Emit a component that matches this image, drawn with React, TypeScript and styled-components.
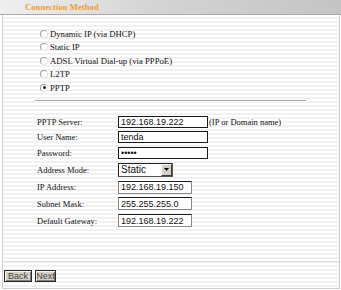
import React from 'react';
import styled, { createGlobalStyle } from 'styled-components';

const GlobalStyle = createGlobalStyle`
  html, body {
    margin: 0;
    padding: 0;
    background: #fff;
  }
  body {
    font-family: "Liberation Serif", "Times New Roman", serif;
  }
`;

const Page = styled.div`
  width: 341px;
  height: 290px;
  display: flex;
  flex-direction: column;
  overflow: hidden;
`;

const Header = styled.div`
  flex: none;
  height: 14px;
  display: flex;
  align-items: center;
  padding-left: 25px;
  background: linear-gradient(to right, #efefef, #d4d4d4 45%, #c4c4c4);
  border-bottom: 1px solid #a9a9a9;
`;

const Title = styled.h1`
  margin: 0;
  font-size: 8.5px;
  font-weight: bold;
  color: #f59a2c;
  letter-spacing: 0.1px;
`;

const Panel = styled.div`
  flex: 1;
  margin: 0 1px 1px 2px;
  border: 1px solid #cfcfcf;
  border-top: none;
  background: repeating-linear-gradient(to bottom, #fff 0 2px, #f1f1f1 2px 4px);
  display: flex;
  flex-direction: column;
`;

const RadioList = styled.div`
  padding: 12px 0 0 37px;
  display: flex;
  flex-direction: column;
`;

const RadioRow = styled.label`
  height: 13.5px;
  display: flex;
  align-items: center;
  gap: 2px;
  font-size: 8.7px;
  color: #111;
`;

const RadioDot = styled.span<{ checked?: boolean }>`
  box-sizing: border-box;
  width: 8px;
  height: 8px;
  border-radius: 50%;
  border: 1px solid #a0a0a0;
  border-right-color: #e4e4e4;
  border-bottom-color: #e4e4e4;
  background: #fff;
  display: flex;
  align-items: center;
  justify-content: center;

  &::after {
    content: '';
    width: 3px;
    height: 3px;
    border-radius: 50%;
    background: ${p => (p.checked ? '#222' : 'transparent')};
  }
`;

const Separator = styled.div`
  margin: 5px 0 0 32px;
  width: 271px;
  height: 1px;
  background: #a8a8a8;
  border-bottom: 1px solid #fff;
`;

const Form = styled.div`
  margin: 14px 0 0 34px;
  display: grid;
  grid-template-columns: 81px auto;
  grid-template-rows: 12px 12px 12px 14px 13px 13px 13px;
  row-gap: 3.75px;
  align-items: center;
`;

const Label = styled.span`
  font-size: 8.5px;
  color: #111;
  white-space: nowrap;
`;

const Field = styled.div`
  display: flex;
  align-items: center;
  height: 100%;
`;

const TextBox = styled.input<{ w: number; dark?: boolean }>`
  box-sizing: border-box;
  width: ${p => p.w}px;
  height: 100%;
  margin: 0;
  padding: 0 0 0 2px;
  border: 1px solid ${p => (p.dark ? '#1a1a1a' : '#8a8a8a')};
  border-top-color: #1a1a1a;
  background: #fff;
  font-family: "Liberation Sans", Arial, sans-serif;
  font-size: 9px;
  color: #111;
  outline: none;
`;

const Note = styled.span`
  margin-left: 1px;
  font-size: 8.5px;
  color: #111;
  white-space: nowrap;
`;

const SelectBox = styled.div`
  box-sizing: border-box;
  width: 55px;
  height: 100%;
  display: flex;
  border: 1px solid #555;
  border-top-color: #222;
  border-left-color: #222;
  background: #fff;
`;

const SelectValue = styled.span`
  flex: 1;
  padding-left: 2px;
  display: flex;
  align-items: center;
  font-family: "Liberation Sans", Arial, sans-serif;
  font-size: 10px;
  color: #111;
`;

const SelectButton = styled.span`
  box-sizing: border-box;
  width: 11px;
  display: flex;
  align-items: center;
  justify-content: center;
  background: #d4d0c8;
  border: 1px solid #fff;
  border-right-color: #404040;
  border-bottom-color: #404040;
`;

const Spacer = styled.div`
  flex: 1;
`;

const BottomLine = styled.div`
  height: 1px;
  background: #dcdcdc;
  margin-bottom: 8px;
`;

const ButtonRow = styled.div`
  display: flex;
  gap: 3px;
  padding: 0 0 6px 1px;
`;

const Button = styled.button<{ w: number }>`
  box-sizing: border-box;
  width: ${p => p.w}px;
  height: 12px;
  margin: 0;
  padding: 0;
  border: 1px solid #2a2a2a;
  box-shadow: inset 1px 1px #f4f4f4, inset -1px -1px #808080;
  background: #d4d0c8;
  font-family: "Liberation Sans", Arial, sans-serif;
  font-size: 9px;
  line-height: 10px;
  color: #444;
`;

const methods = [
  'Dynamic IP (via DHCP)',
  'Static IP',
  'ADSL Virtual Dial-up (via PPPoE)',
  'L2TP',
  'PPTP',
];

const DownArrow = () => (
  <svg width="5" height="3" viewBox="0 0 5 3">
    <path d="M0 0h5L2.5 3z" fill="#000" />
  </svg>
);

export default function App() {
  return (
    <Page>
      <GlobalStyle />
      <Header>
        <Title>Connection Method</Title>
      </Header>
      <Panel>
        <RadioList>
          {methods.map(m => (
            <RadioRow key={m}>
              <RadioDot checked={m === 'PPTP'} />
              {m}
            </RadioRow>
          ))}
        </RadioList>
        <Separator />
        <Form>
          <Label>PPTP Server:</Label>
          <Field>
            <TextBox w={90} dark defaultValue="192.168.19.222" />
            <Note>(IP or Domain name)</Note>
          </Field>
          <Label>User Name:</Label>
          <Field>
            <TextBox w={90} dark defaultValue="tenda" />
          </Field>
          <Label>Password:</Label>
          <Field>
            <TextBox w={90} dark type="password" defaultValue="tenda" />
          </Field>
          <Label>Address Mode:</Label>
          <Field>
            <SelectBox>
              <SelectValue>Static</SelectValue>
              <SelectButton>
                <DownArrow />
              </SelectButton>
            </SelectBox>
          </Field>
          <Label>IP Address:</Label>
          <Field>
            <TextBox w={74} defaultValue="192.168.19.150" />
          </Field>
          <Label>Subnet Mask:</Label>
          <Field>
            <TextBox w={74} defaultValue="255.255.255.0" />
          </Field>
          <Label>Default Gateway:</Label>
          <Field>
            <TextBox w={74} defaultValue="192.168.19.222" />
          </Field>
        </Form>
        <Spacer />
        <BottomLine />
        <ButtonRow>
          <Button w={28}>Back</Button>
          <Button w={21}>Next</Button>
        </ButtonRow>
      </Panel>
    </Page>
  );
}
